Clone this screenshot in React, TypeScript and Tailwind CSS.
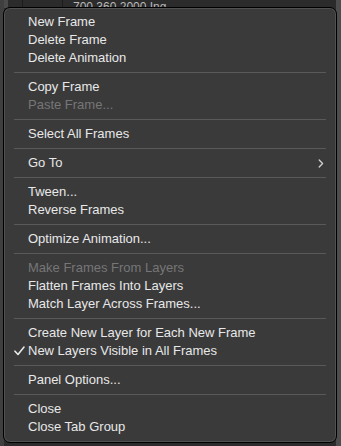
import React from 'react';

type Item =
  | { kind: 'sep' }
  | { kind: 'item'; label: string; disabled?: boolean; checked?: boolean; submenu?: boolean };

const sep: Item = { kind: 'sep' };
const it = (label: string, opts: Partial<Omit<Extract<Item, { kind: 'item' }>, 'kind' | 'label'>> = {}): Item => ({
  kind: 'item',
  label,
  ...opts,
});

const MENU: Item[] = [
  it('New Frame'),
  it('Delete Frame'),
  it('Delete Animation'),
  sep,
  it('Copy Frame'),
  it('Paste Frame...', { disabled: true }),
  sep,
  it('Select All Frames'),
  sep,
  it('Go To', { submenu: true }),
  sep,
  it('Tween...'),
  it('Reverse Frames'),
  sep,
  it('Optimize Animation...'),
  sep,
  it('Make Frames From Layers', { disabled: true }),
  it('Flatten Frames Into Layers'),
  it('Match Layer Across Frames...'),
  sep,
  it('Create New Layer for Each New Frame'),
  it('New Layers Visible in All Frames', { checked: true }),
  sep,
  it('Panel Options...'),
  sep,
  it('Close'),
  it('Close Tab Group'),
];

const MenuRow = ({ item }: { item: Extract<Item, { kind: 'item' }> }) => (
  <div
    className={`flex h-[18px] items-center pr-[14px] ${
      item.disabled ? 'text-[#767676]' : 'text-[#e8e8e8]'
    }`}
  >
    <span className="flex w-[24px] shrink-0 justify-end pr-[3px]">
      {item.checked && (
        <svg width="11" height="10" viewBox="0 0 11 10" fill="none">
          <path d="M1 5.2 L4 8.5 L10 1" stroke="#e8e8e8" strokeWidth="1.6" strokeLinecap="round" strokeLinejoin="round" />
        </svg>
      )}
    </span>
    <span className="flex-1 whitespace-nowrap">{item.label}</span>
    {item.submenu && (
      <svg width="6" height="9" viewBox="0 0 6 9" fill="none" className="mr-[-2px]">
        <path d="M1.2 1 L4.6 4.5 L1.2 8" stroke="#d0d0d0" strokeWidth="1.3" strokeLinecap="round" strokeLinejoin="round" />
      </svg>
    )}
  </div>
);

export default function App() {
  return (
    <div className="relative h-[446px] w-[341px] overflow-hidden bg-[#2b2b2b] font-['Liberation_Sans',Arial,sans-serif]">
      {/* panel behind the menu */}
      <div className="flex h-[8px] items-start">
        <div className="h-full w-[8px] bg-[#4a4a4a]" />
        <div className="ml-[14px] h-full w-px bg-[#1c1c1c]" />
        <div className="ml-[39px] h-full w-px bg-[#1c1c1c]" />
        <div className="ml-[10px] text-[12px] leading-[14px] text-[#b8b8b8]">700 360 2000 Ing</div>
      </div>
      <div className="absolute left-0 top-0 h-full w-[4px] bg-[#3f3f3f]" />
      <div className="absolute right-0 top-0 h-full w-[5px] bg-[#4d4d4d]" />

      {/* flyout menu */}
      <div className="absolute left-[3px] top-[7px] h-[436px] w-[334px] rounded-[7px] border border-black bg-[#3a3a3b] pb-[5px] pt-[5px] text-[13px] leading-[18px] shadow-[inset_0_0_0_1px_rgba(255,255,255,0.12)]">
        {MENU.map((item, i) =>
          item.kind === 'sep' ? (
            <div key={i} className="flex h-[11px] items-center px-[10px]">
              <div className="h-px w-full bg-[#595959]" />
            </div>
          ) : (
            <MenuRow key={i} item={item} />
          )
        )}
      </div>
    </div>
  );
}
